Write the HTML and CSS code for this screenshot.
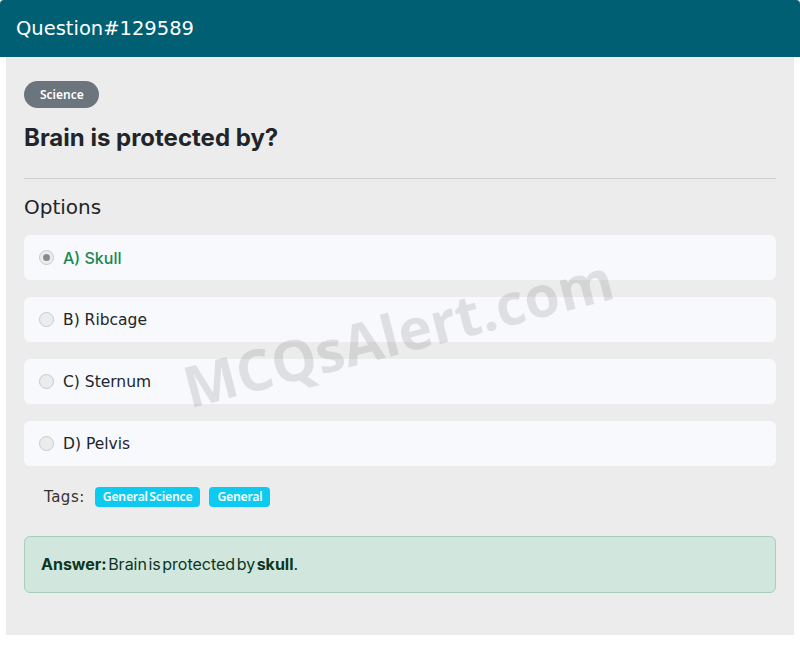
FILE: index.html
```html
<!DOCTYPE html>
<html>
<head>
<meta charset="utf-8">
<link rel="stylesheet" href="styles.css">
</head>
<body>
<div class="card">
  <div class="card-header">Question#129589</div>
  <div class="card-body">
    <span class="badge-cat">Science</span>
    <h1 class="question">Brain is protected by?</h1>
    <hr class="divider">
    <h2 class="options-title">Options</h2>
    <div class="options">
      <div class="option correct"><span class="radio checked"></span><span class="opt-text">A) Skull</span></div>
      <div class="option"><span class="radio"></span><span class="opt-text">B) Ribcage</span></div>
      <div class="option"><span class="radio"></span><span class="opt-text">C) Sternum</span></div>
      <div class="option"><span class="radio"></span><span class="opt-text">D) Pelvis</span></div>
    </div>
    <div class="tags">
      <span class="tags-label">Tags:</span>
      <span class="tag">General Science</span>
      <span class="tag">General</span>
    </div>
    <div class="answer"><b>Answer:</b> Brain is protected by <b>skull</b>.</div>
    <div class="watermark">MCQsAlert.com</div>
  </div>
</div>
</body>
</html>
```

FILE: styles.css
```css
* { box-sizing: border-box; }
html, body { margin: 0; padding: 0; background: #fff; }
body { font-family: "DejaVu Sans", sans-serif; color: #212529; }

.card {
  width: 800px;
  background: #fff;
  border-radius: 6px;
  padding: 0 6px 6px;
}
.card-header {
  margin: 0 -6px;
  height: 57px;
  background: #005f73;
  color: #fff;
  font-size: 19.5px;
  padding: 0 16px;
  display: flex;
  align-items: center;
  border-radius: 4px 4px 0 0;
}
.card-body {
  position: relative;
  background: #ececec;
  padding: 24px 18px 42px;
  overflow: hidden;
}
.badge-cat {
  display: inline-block;
  background: #6c757d;
  color: #fff;
  font-family: "Noto Sans", sans-serif;
  font-weight: 600;
  font-size: 12px;
  line-height: 27px;
  height: 27px;
  padding: 0 15px 0 16px;
  border-radius: 14px;
}
.question {
  font-family: Inter, sans-serif;
  font-weight: 700;
  font-size: 24px;
  margin: 12px 0 0;
  line-height: 36px;
}
.divider {
  border: 0;
  border-top: 1px solid #d0d0d0;
  margin: 22px 0 0;
}
.options-title {
  font-weight: 400;
  font-size: 20px;
  margin: 15px 0 0;
  line-height: 26px;
}
.options {
  margin-top: 15px;
  display: flex;
  flex-direction: column;
  gap: 17px;
}
.option {
  height: 45px;
  background: #f8f9fc;
  border-radius: 6px;
  display: flex;
  align-items: center;
  padding-left: 15px;
  font-size: 15.5px;
}
.radio {
  width: 15px;
  height: 15px;
  border-radius: 50%;
  border: 1px solid #c9c9c9;
  background: #ececec;
  margin-right: 9px;
  flex: none;
  position: relative;
}
.radio.checked::after {
  content: "";
  position: absolute;
  left: 3px; top: 3px;
  width: 7px; height: 7px;
  border-radius: 50%;
  background: #8a8a8a;
}
.option.correct .opt-text {
  color: #198754;
  font-family: Inter, sans-serif;
  font-weight: 500;
  font-size: 16px;
}
.tags {
  margin: 20px 0 0 20px;
  display: flex;
  align-items: center;
  gap: 9px;
  height: 22px;
}
.tags-label {
  font-size: 15px;
  color: #333;
  margin-right: 1px;
  letter-spacing: 0.5px;
}
.tag {
  background: #0dcaf0;
  color: #fff;
  font-family: "Noto Sans", sans-serif;
  font-weight: 600;
  font-size: 12.2px;
  letter-spacing: -0.2px;
  word-spacing: -1.5px;
  line-height: 20px;
  padding: 0 8px;
  border-radius: 4px;
}
.answer {
  margin-top: 28px;
  background: #d1e7dd;
  border: 1px solid #a3cfbb;
  border-radius: 6px;
  color: #0a3622;
  font-family: Inter, sans-serif;
  font-size: 16px;
  padding: 18px 16px;
  line-height: 19px;
  word-spacing: -3px;
}
.answer b { font-weight: 700; }
.watermark {
  position: absolute;
  left: 188px;
  top: 290px;
  font-family: "Open Sans", sans-serif;
  font-weight: 700;
  font-size: 57px;
  color: rgba(0, 0, 0, 0.1);
  transform: rotate(-14.5deg);
  transform-origin: left bottom;
  white-space: nowrap;
  pointer-events: none;
}
```
